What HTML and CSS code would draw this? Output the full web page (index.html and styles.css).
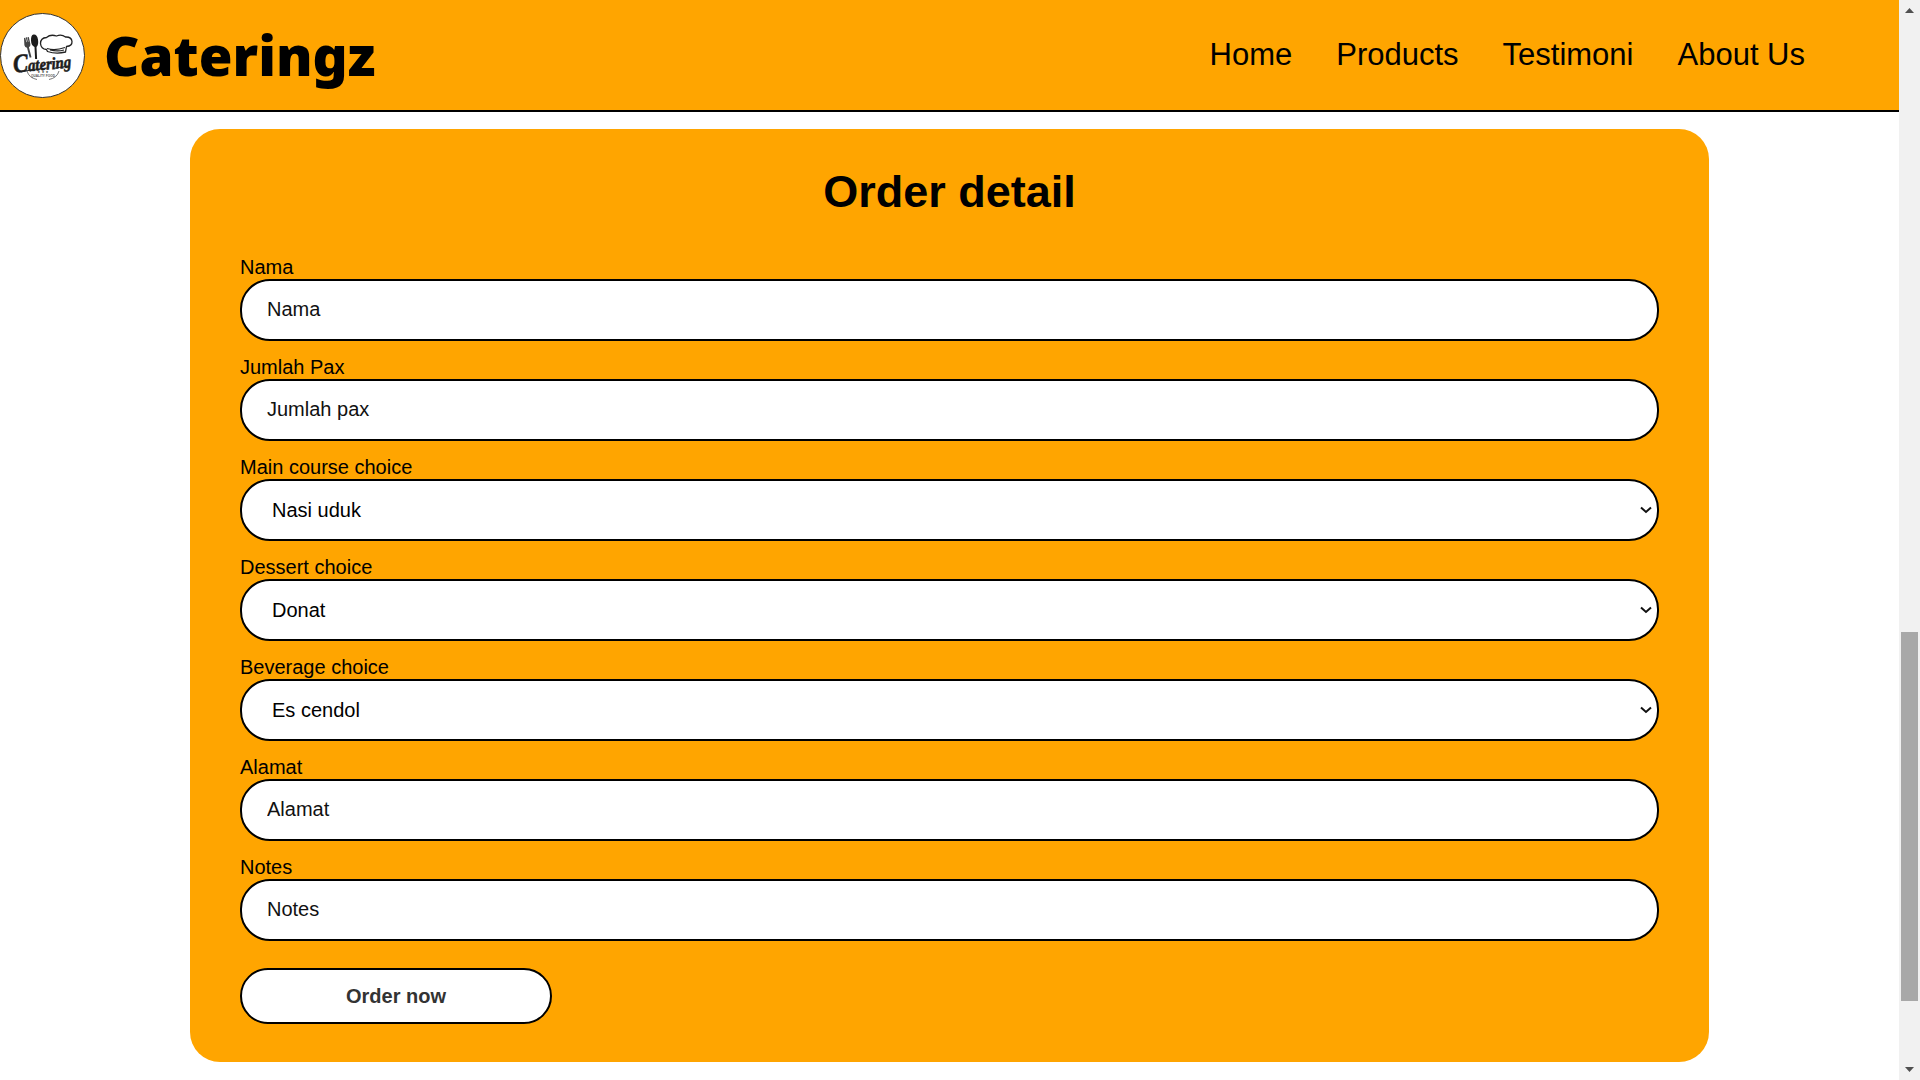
FILE: index.html
```html
<!DOCTYPE html>
<html lang="id">
<head>
<meta charset="utf-8">
<title>Cateringz</title>
<link rel="stylesheet" href="styles.css">
</head>
<body>
<div class="page">
  <header class="topbar">
    <div class="brand">
      <svg class="logo" viewBox="0 0 85 85" aria-hidden="true">
        <circle cx="42.5" cy="42.5" r="42" fill="#fff" stroke="#333" stroke-width="1"/>
        <path d="M24 25 l1.300 -.3 l1 4.500 l.5 -.1 l-1 -4.500 l1.200 -.3 l1 4.500 l.5 -.1 l-1 -4.500 l1.300 -.3 l1.600 7 q.4 2.500 -1.500 3.300 l2.600 10 l-1.800 .5 l-2.700 -10 q-2 -.2 -2.600 -2.500z" fill="#444"/>
        <path d="M33.500 21.500 q3.500 -.5 4.500 5 q.8 5.500 -1.500 7.500 l.6 12 l-2 .1 l-.6 -12 q-3.300 -1.500 -3.500 -6.500 q-.2 -5.500 2.500 -6.100z" fill="#1c1c1c"/>
        <path d="M46.500 36.500 q-5.500 -.5 -6 -6 q0 -5.500 6 -6 q4 -3.500 10 -1.500 q5 -2 9 1 q6 -.3 6.500 4.500 q.3 4.500 -5.500 5 l-1 5.500 q-9 2.500 -18 -.5z" fill="#fff" stroke="#222" stroke-width="1.300"/>
        <path d="M47 35.500 q8 2.500 18 -1 M50 37 q8 1.800 14 0" fill="none" stroke="#222" stroke-width="1.200"/>
        <text class="logo-script" x="13" y="57" textLength="58" lengthAdjust="spacingAndGlyphs" transform="rotate(-5 42 50)"><tspan class="logo-cap">C</tspan>atering</text>
        <path d="M21 59 q12 -3 26 -4 M55 55 q8 -1 13 -2" fill="none" stroke="#222" stroke-width="1.200"/>
        <text class="logo-stars" x="43" y="60" text-anchor="middle">★ ★ ★</text>
        <text class="logo-small" x="43" y="64" text-anchor="middle">QUALITY FOOD</text>
        <path d="M27 58 q2 7 10 8.500 M59 58 q-2 7 -10 8.500" fill="none" stroke="#555" stroke-width=".8"/>
      </svg>
      <span class="brand-name">Cateringz</span>
    </div>
    <nav class="nav">
      <a class="nav-link" href="#">Home</a>
      <a class="nav-link" href="#">Products</a>
      <a class="nav-link" href="#">Testimoni</a>
      <a class="nav-link" href="#">About Us</a>
    </nav>
  </header>
  <main class="content">
    <form class="card">
      <h1 class="card-title">Order detail</h1>
      <div class="field">
        <label class="field-label" for="nama">Nama</label>
        <input class="control control-input" id="nama" type="text" placeholder="Nama">
      </div>
      <div class="field">
        <label class="field-label" for="pax">Jumlah Pax</label>
        <input class="control control-input" id="pax" type="text" placeholder="Jumlah pax">
      </div>
      <div class="field">
        <label class="field-label" for="main">Main course choice</label>
        <select class="control control-select" id="main"><option>Nasi uduk</option></select>
      </div>
      <div class="field">
        <label class="field-label" for="dessert">Dessert choice</label>
        <select class="control control-select" id="dessert"><option>Donat</option></select>
      </div>
      <div class="field">
        <label class="field-label" for="beverage">Beverage choice</label>
        <select class="control control-select" id="beverage"><option>Es cendol</option></select>
      </div>
      <div class="field">
        <label class="field-label" for="alamat">Alamat</label>
        <input class="control control-input" id="alamat" type="text" placeholder="Alamat">
      </div>
      <div class="field">
        <label class="field-label" for="notes">Notes</label>
        <input class="control control-input" id="notes" type="text" placeholder="Notes">
      </div>
      <button class="submit" type="button">Order now</button>
    </form>
  </main>
</div>
<div class="scrollbar" aria-hidden="true">
  <svg class="scroll-arrow" viewBox="0 0 21 21"><path d="M6 13 L10.500 8 L15 13z" fill="#505050"/></svg>
  <div class="scroll-thumb"></div>
  <svg class="scroll-arrow scroll-arrow-down" viewBox="0 0 21 21"><path d="M6 8 L15 8 L10.500 13z" fill="#505050"/></svg>
</div>
</body>
</html>
```
FILE: styles.css
```css
* { box-sizing: border-box; }
html, body { margin: 0; height: 100%; }
body {
  display: flex;
  height: 100vh;
  overflow: hidden;
  background: #fff;
  font-family: "Liberation Sans", Arial, sans-serif;
  color: #000;
}
.page { flex: 1; min-width: 0; display: flex; flex-direction: column; }

.topbar {
  height: 112px;
  flex: none;
  display: flex;
  align-items: center;
  justify-content: space-between;
  background: #ffa500;
  border-bottom: 2px solid #000;
  padding-right: 94px;
}
.brand { display: flex; align-items: center; gap: 19px; }
.logo { width: 85px; height: 85px; display: block; margin-top: 1px; flex: none; }
.logo-script { font: italic 700 17px "Liberation Serif", serif; fill: #1c1c1c; stroke: #1c1c1c; stroke-width: .6px; }
.logo-cap { font-size: 26px; }
.logo-stars { font: 3.4px "DejaVu Sans", sans-serif; fill: #333; }
.logo-small { font: 700 3.2px "Liberation Sans", sans-serif; fill: #555; }
.brand-name {
  font-family: "Noto Sans", sans-serif;
  font-weight: 900;
  font-size: 54.7px;
  line-height: 1;
  color: #000;
}
.nav { display: flex; gap: 44px; }
.nav-link {
  font-size: 31px;
  line-height: 36px;
  color: #000;
  text-decoration: none;
}

.content { padding: 17px 190px 0; }
.card {
  background: #ffa500;
  border-radius: 30px;
  height: 933px;
  padding: 37px 50px 0;
  display: flex;
  flex-direction: column;
  gap: 15px;
}
.card-title {
  margin: 0 0 23px;
  text-align: center;
  font-size: 45px;
  line-height: 52px;
  font-weight: 700;
}
.field { display: flex; flex-direction: column; }
.field-label { font-size: 20px; line-height: 23px; }
.control {
  width: 100%;
  height: 62px;
  padding: 0 25px;
  border: 2px solid #000;
  border-radius: 30px;
  background: #fff;
  font-family: "Liberation Sans", Arial, sans-serif;
  font-size: 20px;
  color: #000;
  outline: none;
}
.control-input { padding-bottom: 2px; }
.control::placeholder { color: #111; opacity: 1; }
.control-select {
  appearance: none;
  padding: 0 30px;
  background: #fff url("data:image/svg+xml,%3Csvg xmlns='http://www.w3.org/2000/svg' width='12' height='8' viewBox='0 0 12 8'%3E%3Cpath d='M1 1.500 L6 6 L11 1.500' fill='none' stroke='%23111' stroke-width='2'/%3E%3C/svg%3E") no-repeat right 5px center;
}
.submit {
  width: 312px;
  height: 56px;
  margin-top: 12px;
  border: 2px solid #000;
  border-radius: 28px;
  background: #fff;
  font-family: "Liberation Sans", Arial, sans-serif;
  font-size: 20px;
  font-weight: 700;
  color: #333;
}

.scrollbar {
  width: 21px;
  flex: none;
  background: #f1f1f1;
  display: flex;
  flex-direction: column;
  align-items: center;
}
.scroll-arrow { width: 21px; height: 21px; flex: none; display: block; }
.scroll-arrow-down { margin-top: auto; }
.scroll-thumb { width: 17px; height: 369px; margin-top: 611px; background: #a8a8a8; flex: none; }
```
